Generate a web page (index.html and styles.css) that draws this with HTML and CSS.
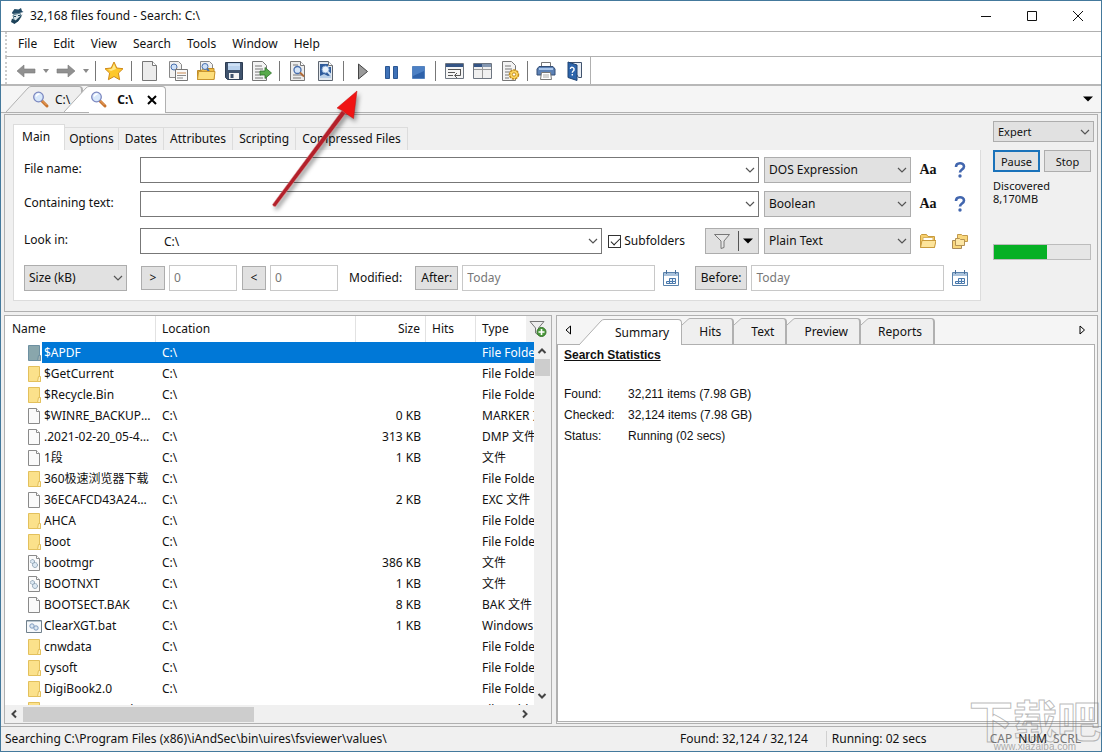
FILE: index.html
```html
<!DOCTYPE html>
<html lang="en">
<head>
  <meta charset="UTF-8">
  <meta name="viewport" content="width=device-width, initial-scale=1.0">
  <title>32,168 files found - Search: C:\</title>
  <link rel="stylesheet" href="styles.css">
</head>
<body>

  <!-- Shared icons -->
  <svg class="sprite" aria-hidden="true">
    <symbol id="i-lens" viewBox="0 0 20 20">
      <path d="M11 11l5 5" stroke="#c8742e" stroke-width="3" stroke-linecap="round"/>
      <path d="M11 10.500l4.500 4.500" stroke="#eda868" stroke-width="1"/>
      <circle cx="7.500" cy="7" r="4.800" fill="#d8e8fb" stroke="#7c88c0" stroke-width="1.300"/>
      <path d="M5 6.500q1-2.500 3.500-2.500" fill="none" stroke="#fff" stroke-width="1.500"/>
    </symbol>
    <symbol id="i-down" viewBox="0 0 10 10"><path d="M1 3l4 4 4-4" fill="none" stroke="#555" stroke-width="1.200"/></symbol>
    <symbol id="i-caret" viewBox="0 0 10 10"><path d="M0 2.500h10L5 7.500z"/></symbol>
    <symbol id="i-folder" viewBox="0 0 16 18">
      <path d="M2.500 1.500h11v11l1 0v4h-12z" fill="#fbe18b" stroke="#e3c05c"/>
      <path d="M12.500 11.500h2v5h-3z" fill="#fff0b8" stroke="#e3c05c"/>
    </symbol>
    <symbol id="i-file" viewBox="0 0 16 18">
      <path d="M2.500 1.500h8l3 3v12h-11z" fill="#fafafa" stroke="#8a8a8a"/>
      <path d="M10.500 1.500v3h3" fill="#fff" stroke="#8a8a8a"/>
    </symbol>
    <symbol id="i-gears" viewBox="0 0 16 18">
      <path d="M2.500 1.500h8l3 3v12h-11z" fill="#fafafa" stroke="#8a8a8a"/>
      <path d="M10.500 1.500v3h3" fill="#fff" stroke="#8a8a8a"/>
      <circle cx="6.500" cy="7.500" r="2" fill="#dce8f2" stroke="#8298ab" stroke-dasharray="1.500 .5"/>
      <circle cx="9" cy="11" r="2.500" fill="#dce8f2" stroke="#8298ab" stroke-dasharray="1.500 .5"/>
    </symbol>
    <symbol id="i-bat" viewBox="0 0 16 18">
      <path d="M.5 3.500h15v12H.5z" fill="#f6f8fa" stroke="#70808c"/>
      <path d="M1 4.500h14" stroke="#b9c6d0"/>
      <circle cx="6" cy="9" r="2.200" fill="#dce8f2" stroke="#7f9cc0"/>
      <circle cx="10" cy="11" r="2.200" fill="#dce8f2" stroke="#7f9cc0"/>
    </symbol>
    <symbol id="i-calendar" viewBox="0 0 16 16">
      <path d="M.5 2.500h15v13H.5z" fill="#fff" stroke="#5a82ab"/>
      <path d="M1 3h14v3H1z" fill="#a9c2dc"/>
      <path d="M3.500 0v4M12.500 0v4" stroke="#4a6f9a"/>
      <path d="M6 8h7v3h-3v3H3v-3h3z" fill="#e8f1fa"/>
      <path d="M6.500 8.500h6v3h-3v2h-6v-2h3zM9.500 8.500v3M6.500 11.500v2M6.500 11.500h3M12.500 11.500v2h-3" fill="none" stroke="#4777ab"/>
    </symbol>
    <symbol id="i-help" viewBox="0 0 16 18">
      <path d="M4 6c0-5 8-5 8-.5 0 3-4 3-4 6" fill="none" stroke="#4266ae" stroke-width="2.600"/>
      <circle cx="8" cy="15" r="1.700" fill="#4266ae"/>
    </symbol>
    <symbol id="i-page" viewBox="0 0 20 20">
      <path d="M2.500.5h10l4 4v15h-14z" fill="#ececec" stroke="#777"/>
      <path d="M12.500.5v4h4" fill="#fff" stroke="#777"/>
    </symbol>
    <symbol id="i-slant" viewBox="0 0 25 26">
      <path d="M0 26L22 2Q23.500.5 25 .5V26z" stroke="none"/>
      <path d="M0 26L22 2Q23.500.5 25 .5" fill="none"/>
    </symbol>
    <symbol id="i-corner" viewBox="0 0 8 26">
      <path d="M0 26V7L6 1.500Q7 .5 8 .5V26z" stroke="none"/>
      <path d="M0 7L6 1.500Q7 .5 8 .5" fill="none"/>
    </symbol>
  </svg>

  <div class="window">
    <header class="titlebar">
      <svg class="app-icon" viewBox="0 0 14 16">
        <path d="M2 4.500L4.500 1l4 .5L11 0l1 3 1.500 1-6 1.500-5 .5z" fill="#234b66"/>
        <path d="M3 7l7-2 1 4-4 5-3-2z" fill="#d9e5ea" stroke="#3b6478" stroke-width=".8"/>
        <path d="M12.500 6l-4 7-4 3-3.500-2 1-3.500 3.500 2z" fill="#1d4259"/>
        <path d="M4 8.500h2M8 7.500h2" stroke="#1d4259" stroke-width="1.200"/>
      </svg>
      <span class="title">32,168 files found - Search: C:\</span>
      <div class="window-buttons">
        <button aria-label="Minimize"><svg viewBox="0 0 12 12"><path d="M1 6.500h10"/></svg></button>
        <button aria-label="Maximize"><svg viewBox="0 0 12 12"><path d="M1.500 1.500h9v9h-9z"/></svg></button>
        <button aria-label="Close"><svg viewBox="0 0 12 12"><path d="M1 1l10 10M11 1L1 11"/></svg></button>
      </div>
    </header>

    <nav class="menubar">
      <button>File</button><button>Edit</button><button>View</button><button>Search</button><button>Tools</button><button>Window</button><button>Help</button>
    </nav>

    <div class="toolbar-row">
      <div class="toolbar">
        <button aria-label="Back"><svg viewBox="0 0 20 20"><path d="M1 10l7-6v4h11v4H8v4z" fill="#909090" stroke="#7b7b7b" stroke-width=".6"/></svg></button>
        <button class="drop" aria-label="Back history"><svg viewBox="0 0 10 10"><path d="M2 3h6L5 7z" fill="#8a8a8a"/></svg></button>
        <button aria-label="Forward"><svg viewBox="0 0 20 20"><path d="M19 10l-7-6v4H1v4h11v4z" fill="#909090" stroke="#7b7b7b" stroke-width=".6"/></svg></button>
        <button class="drop" aria-label="Forward history"><svg viewBox="0 0 10 10"><path d="M2 3h6L5 7z" fill="#8a8a8a"/></svg></button>
        <span class="sep"></span>
        <button aria-label="Favorites"><svg viewBox="0 0 20 20"><path d="M10 1l2.800 6 6.200.7-4.600 4.400 1.200 6.600L10 15.500l-5.600 3.200 1.200-6.600L1 7.700 7.200 7z" fill="#fdc82b" stroke="#d08a18"/><path d="M10 3l2 5-5 2-3-1.500 4-.8z" fill="#ffe98c"/></svg></button>
        <span class="sep"></span>
        <button aria-label="New search"><svg viewBox="0 0 20 20"><use href="#i-page"/></svg></button>
        <button aria-label="Search criteria"><svg viewBox="0 0 20 20"><path d="M1.500.5h9l3 3v13h-12z" fill="#f1f1f1" stroke="#888"/><circle cx="6" cy="6" r="3" fill="#cfe1f7" stroke="#486fae"/><path d="M8 8l3 3" stroke="#c27a3c" stroke-width="2"/><path d="M7.500 8.500h12v11h-12z" fill="#fafafa" stroke="#777"/><path d="M9 12h9" stroke="#c98b54"/><path d="M9 14.500h9M9 17h6" stroke="#8b8b8b"/></svg></button>
        <button aria-label="Open"><svg viewBox="0 0 20 20"><path d="M4.500.5h9l3 3v10h-12z" fill="#f1f1f1" stroke="#888"/><path d="M1.500 9.500h4l1.500-2h11v11h-16.500z" fill="#f0bc43" stroke="#c08c26"/><circle cx="9" cy="5.500" r="3" fill="#cfe1f7" stroke="#486fae"/><path d="M11 8l2 2" stroke="#486fae" stroke-width="2"/><path d="M1.500 18.500l1-8h16.500l-1 8z" fill="#fddf7d" stroke="#c9962e"/></svg></button>
        <button aria-label="Save"><svg viewBox="0 0 20 20"><path d="M1.500 1.500h17v17H3.500l-2-2z" fill="#40536d" stroke="#2c3c52"/><path d="M4 2h12v7H4z" fill="#b9d2ee"/><path d="M4 4h12" stroke="#e5f0fb"/><path d="M5 12h10v6H5z" fill="#f4f4f4"/><path d="M6.500 13h3v4h-3z" fill="#40536d"/></svg></button>
        <button aria-label="Export"><svg viewBox="0 0 20 20"><path d="M.5.5h10l4 4v15H.5z" fill="#f4f4f4" stroke="#777"/><path d="M3 5h7M3 8h8M3 11h6M3 14h6M3 17h8" stroke="#777"/><path d="M8 10h5V6.500l6.500 5.500L13 17.500V14H8z" fill="#58ab4b" stroke="#2d6f29" stroke-width=".8"/></svg></button>
        <span class="sep"></span>
        <button aria-label="Find in file"><svg viewBox="0 0 20 20"><use href="#i-page"/><path d="M5 4h5M5 14h9M5 17h8" stroke="#777"/><circle cx="9.500" cy="9" r="3.500" fill="#d5e5f8" stroke="#486fae" stroke-width="1.300"/><path d="M12 11.500l4 4" stroke="#b06a38" stroke-width="1.800"/></svg></button>
        <button aria-label="Find in image"><svg viewBox="0 0 20 20"><path d="M2.500.5h10l4 4v15h-14z" fill="#e4e9ef" stroke="#5e6670"/><path d="M12.500.5v4h4" fill="#fff" stroke="#777"/><path d="M4 3h8v3h3v11H4z" fill="#2f5b9b"/><path d="M4 15l4-2 4 2 3-1v3H4z" fill="#b9cfe8"/><circle cx="9.500" cy="8.500" r="3.500" fill="#e9f2fc" stroke="#88a9d4"/><path d="M12 11l3 3" stroke="#d5e3f3" stroke-width="2"/></svg></button>
        <span class="sep"></span>
        <button aria-label="Start"><svg viewBox="0 0 20 20"><path d="M6.500 3v15L15.500 10.500z" fill="#9a9a9a" stroke="#444"/></svg></button>
        <button aria-label="Pause search"><svg viewBox="0 0 20 20"><path d="M5.500 5.500h4v12h-4zM13.500 5.500h4v12h-4z" fill="#3f72b8" stroke="#2b5692"/></svg></button>
        <button aria-label="Stop search"><svg viewBox="0 0 20 20"><path d="M4.500 5.500h12v12h-12z" fill="#2f62aa" stroke="#5583bf"/><path d="M5 6h11v4L5 15z" fill="#4c80c4"/></svg></button>
        <span class="sep"></span>
        <button aria-label="Word wrap"><svg viewBox="0 0 20 20"><path d="M1.500 2.500h18v15h-18z" fill="#f5f5f5" stroke="#6d7580"/><path d="M2 3h17v3H2z" fill="#345485"/><path d="M4 8.500h13M4 11.500h7M4 14.500h5M16.500 9v5.500H11M13 12l-2.500 2.500L13 17" fill="none" stroke="#555"/></svg></button>
        <button aria-label="Layout"><svg viewBox="0 0 20 20"><path d="M1.500 2.500h18v15h-18z" fill="#f0f0f0" stroke="#6d7580"/><path d="M2 3h8v3H2z" fill="#345485"/><path d="M10 3h9v3h-9z" fill="#8396b0"/><path d="M2 8.500h17M10.500 6v11" stroke="#999"/></svg></button>
        <button aria-label="Settings"><svg viewBox="0 0 20 20"><path d="M2.500.5h9l4 4v15h-13z" fill="#f4f4f4" stroke="#777"/><path d="M5 5h6M5 8h7M5 11h5M5 14h4M5 17h4" stroke="#777"/><circle cx="14" cy="13.500" r="4.500" fill="#ffd75e" stroke="#c18d22" stroke-width="1.500" stroke-dasharray="2.500 .8"/><circle cx="14" cy="13.500" r="1.700" fill="#fff" stroke="#c18d22"/></svg></button>
        <span class="sep"></span>
        <button aria-label="Print"><svg viewBox="0 0 20 20"><path d="M5.500 1.500h9v6h-9z" fill="#fff" stroke="#777"/><path d="M1 8l2-2.500h14l2 2.500v6H1z" fill="#5c81b5" stroke="#334d74"/><path d="M3 7h14v2H3z" fill="#aac6ea"/><path d="M5.500 11.500h9l1 7h-11z" fill="#fff" stroke="#777"/><path d="M7 14h6M7 16h6" stroke="#aaa"/></svg></button>
        <button aria-label="Help contents"><svg viewBox="0 0 20 20"><path d="M4.500 1.500h13v15h-3z" fill="#e8edf4" stroke="#41536e"/><path d="M4 1l9 3v15.500l-9-3z" fill="#2c64ab" stroke="#1f4272"/><path d="M6.500 8c0-3 4-1.500 3.500.8-.2 1.500-1.500 1-1.700 3M8.300 13v1.500" fill="none" stroke="#fff" stroke-width="1.400"/></svg></button>
      </div>
    </div>

    <!-- Open searches -->
    <div class="doc-tabs">
      <button class="slant-tab doc">
        <svg class="slant"><use href="#i-slant"/></svg>
        <span class="tab-body"><svg class="lens"><use href="#i-lens"/></svg>C:\</span>
      </button>
      <button class="slant-tab doc active">
        <svg class="slant"><use href="#i-slant"/></svg>
        <span class="tab-body"><svg class="lens"><use href="#i-lens"/></svg>C:\
          <svg class="close" viewBox="0 0 10 10"><path d="M1 1l8 8M9 1L1 9"/></svg></span>
      </button>
      <button class="tab-list" aria-label="List tabs"><svg viewBox="0 0 10 10"><use href="#i-caret"/></svg></button>
    </div>

    <!-- Search criteria -->
    <section class="criteria">
      <div class="criteria-main">
        <div class="page-tabs">
          <button class="active">Main</button><button>Options</button><button>Dates</button><button>Attributes</button><button>Scripting</button><button>Compressed Files</button>
        </div>
        <form class="form">
          <div class="pair">
            <div class="row">
              <label for="fname">File name:</label>
              <div class="combo"><input id="fname" type="text"><svg><use href="#i-down"/></svg></div>
              <div class="pick"><select aria-label="File name expression"><option>DOS Expression</option></select><svg><use href="#i-down"/></svg></div>
              <button type="button" class="tool aa">Aa</button>
              <button type="button" class="tool" aria-label="File name help"><svg class="help"><use href="#i-help"/></svg></button>
            </div>
            <div class="row">
              <label for="ctext">Containing text:</label>
              <div class="combo"><input id="ctext" type="text"><svg><use href="#i-down"/></svg></div>
              <div class="pick"><select aria-label="Text expression"><option>Boolean</option></select><svg><use href="#i-down"/></svg></div>
              <button type="button" class="tool aa">Aa</button>
              <button type="button" class="tool" aria-label="Containing text help"><svg class="help"><use href="#i-help"/></svg></button>
            </div>
          </div>
          <div class="row">
            <label for="lookin">Look in:</label>
            <div class="combo look"><input id="lookin" type="text" value="C:\"><svg><use href="#i-down"/></svg></div>
            <label class="check"><input type="checkbox" checked>Subfolders</label>
            <button type="button" class="filter" aria-label="Filter">
              <svg class="funnel" viewBox="0 0 16 16"><path d="M.5 1.500h15L10 8v6.500l-3 1V8z" fill="#e6e6e6" stroke="#777"/></svg>
              <svg class="arrow"><use href="#i-caret"/></svg>
            </button>
            <div class="pick"><select aria-label="Document format"><option>Plain Text</option></select><svg><use href="#i-down"/></svg></div>
            <button type="button" class="tool" aria-label="Browse folder"><svg viewBox="0 0 16 16"><path d="M.5 14.500v-12l1-1h5l1.500 2h6.500v11z" fill="#f7cf6d" stroke="#c99b3c"/><path d="M3 4.500h10v4H3z" fill="#fff" stroke="#d8b25c"/><path d="M.5 14.500l1.500-7h14l-1.500 7z" fill="#fde49a" stroke="#c99b3c"/></svg></button>
            <button type="button" class="tool" aria-label="Browse multiple folders"><svg viewBox="0 0 16 16"><path d="M5.500 8.500v-7h4l1 1h5v6z" fill="#f9d77c" stroke="#c29a4d"/><path d="M.5 15.500v-8h3l1 1h5v7z" fill="#f9d77c" stroke="#a98a58"/><path d="M3.500 12.500v-7h4l1 1h4v6z" fill="#fde7a6" stroke="#b59355"/></svg></button>
          </div>
          <div class="row">
            <div class="pick size"><select aria-label="Size unit"><option>Size (kB)</option></select><svg><use href="#i-down"/></svg></div>
            <button type="button" class="cmp">&gt;</button>
            <input class="num" type="text" placeholder="0" aria-label="Larger than">
            <button type="button" class="cmp">&lt;</button>
            <input class="num" type="text" placeholder="0" aria-label="Smaller than">
            <span class="modified">Modified:</span>
            <button type="button" class="when">After:</button>
            <input class="date" type="text" placeholder="Today" aria-label="Modified after">
            <button type="button" class="tool" aria-label="Pick after date"><svg><use href="#i-calendar"/></svg></button>
            <button type="button" class="when before">Before:</button>
            <input class="date" type="text" placeholder="Today" aria-label="Modified before">
            <button type="button" class="tool" aria-label="Pick before date"><svg><use href="#i-calendar"/></svg></button>
          </div>
        </form>
      </div>
      <aside class="control">
        <div class="pick"><select aria-label="Mode"><option>Expert</option></select><svg><use href="#i-down"/></svg></div>
        <div class="run-buttons"><button class="focus">Pause</button><button>Stop</button></div>
        <p>Discovered<br>8,170MB</p>
        <div class="progress" role="progressbar" aria-label="Progress"><div class="bar" style="width: 55%"></div></div>
      </aside>
    </section>

    <main class="split">
      <!-- Result list -->
      <section class="results">
        <div class="list">
          <table>
            <colgroup><col class="c-name"><col class="c-loc"><col class="c-size"><col class="c-hits"><col></colgroup>
            <thead><tr><th>Name</th><th>Location</th><th class="num-cell">Size</th><th>Hits</th><th>Type</th></tr></thead>
            <tbody id="rows"></tbody>
          </table>
        </div>
        <button class="add-filter" aria-label="Filter results"><svg viewBox="0 0 18 18"><path d="M1 1.500h14L9.500 8v7l-3-2V8z" fill="#eee" stroke="#777"/><circle cx="12.500" cy="12" r="4.500" fill="#4c9a3c" stroke="#35752a"/><path d="M12.500 9v6M9.500 12h6" stroke="#fff" stroke-width="1.600"/></svg></button>
        <div class="vbar">
          <svg viewBox="0 0 10 10"><path d="M1.500 7L5 3.500 8.500 7"/></svg>
          <div class="thumb"></div>
          <svg class="end" viewBox="0 0 10 10"><path d="M1.500 3L5 6.500 8.500 3"/></svg>
        </div>
        <div class="hbar">
          <svg viewBox="0 0 10 10"><path d="M7 1.500L3.500 5 7 8.500"/></svg>
          <div class="thumb"></div>
          <svg class="end" viewBox="0 0 10 10"><path d="M3 1.500L6.500 5 3 8.500"/></svg>
        </div>
      </section>

      <!-- Details -->
      <section class="details">
        <div class="detail-tabs">
          <button class="scroll" aria-label="Scroll tabs left"><svg viewBox="0 0 6 10"><path d="M5.500 1v8L1 5z"/></svg></button>
          <button class="slant-tab active"><svg class="slant"><use href="#i-slant"/></svg><span class="tab-body">Summary</span></button>
          <button class="slant-tab"><svg class="slant short"><use href="#i-corner"/></svg><span class="tab-body">Hits</span></button>
          <button class="slant-tab"><svg class="slant short"><use href="#i-corner"/></svg><span class="tab-body">Text</span></button>
          <button class="slant-tab"><svg class="slant short"><use href="#i-corner"/></svg><span class="tab-body">Preview</span></button>
          <button class="slant-tab"><svg class="slant short"><use href="#i-corner"/></svg><span class="tab-body">Reports</span></button>
          <button class="scroll last" aria-label="Scroll tabs right"><svg viewBox="0 0 6 10"><path d="M1 1v8l4.500-4z"/></svg></button>
        </div>
        <div class="summary">
          <h2>Search Statistics</h2>
          <dl>
            <dt>Found:</dt><dd>32,211 items (7.98 GB)</dd>
            <dt>Checked:</dt><dd>32,124 items (7.98 GB)</dd>
            <dt>Status:</dt><dd>Running (02 secs)</dd>
          </dl>
        </div>
      </section>
    </main>

    <footer class="statusbar">
      <span class="path">Searching C:\Program Files (x86)\iAndSec\bin\uires\fsviewer\values\</span>
      <span class="found">Found: 32,124 / 32,124</span>
      <span class="running">Running: 02 secs</span>
      <span class="keys"><span>CAP</span><b>NUM</b><span>SCRL</span></span>
    </footer>
  </div>

  <!-- Arrow pointing at the start button -->
  <svg class="pointer" viewBox="0 0 100 130" aria-hidden="true">
    <path d="M77 25.500L7.500 119.500Q8 122 10.500 121.500L80.500 28.500z" fill="#b3202a" stroke="#d88" stroke-width=".5"/>
    <path d="M92 6L72 23l5.500 2.500 3.500 3 7.500 5z" fill="#f01414" stroke="#c01010" stroke-width=".5"/>
  </svg>

  <div class="watermark" aria-hidden="true">
    <div class="mark">下载吧</div>
    <div class="site">www.xiazaiba.com</div>
  </div>

  <script src="script.js"></script>
</body>
</html>
```
FILE: styles.css
```css
* {
  box-sizing: border-box;
}

body {
  margin: 0;
  font: 12px/16px "Noto Sans", "Noto Sans CJK SC", sans-serif;
  color: #111;
  background: #fff;
  overflow: hidden;
}

button,
input,
select {
  font: inherit;
  color: inherit;
  margin: 0;
}

button {
  padding: 0;
  border: 0;
  background: none;
}

.sprite {
  position: absolute;
  width: 0;
  height: 0;
}

.window {
  display: flex;
  flex-direction: column;
  height: 100vh;
  border: 1px solid #44799c;
  background: #f0f0f0;
}

/* Title bar */
.titlebar {
  display: flex;
  align-items: center;
  height: 31px;
  padding-left: 9px;
  background: #fff;
  border-bottom: 1px solid #b0b0b0;
}

.app-icon {
  width: 14px;
  height: 16px;
  margin-right: 6px;
}

.window-buttons {
  display: flex;
  margin-left: auto;
}

.window-buttons button {
  display: flex;
  justify-content: center;
  width: 46px;
}

.window-buttons svg {
  width: 12px;
  height: 12px;
  fill: none;
  stroke: #111;
}

/* Menu */
.menubar {
  display: flex;
  height: 25px;
  margin-left: 4px;
  padding-left: 3px;
  background: #fff;
  border-left: 2px dotted #ccc;
  border-bottom: 1px solid #b0b0b0;
  box-shadow: -4px 0 #fff;
}

.menubar button {
  padding: 0 8px;
}

/* Toolbar */
.toolbar-row {
  height: 29px;
  padding-left: 4px;
  background: #fff;
  border-bottom: 2px solid #b8b8b8;
}

.toolbar {
  display: flex;
  align-items: center;
  width: max-content;
  height: 27px;
  padding: 0 2px 0 5px;
  border-left: 2px dotted #ccc;
  border-right: 1px solid #b0b0b0;
}

.toolbar button {
  display: flex;
  align-items: center;
  justify-content: center;
  width: 28px;
}

.toolbar svg {
  width: 20px;
  height: 20px;
}

.toolbar .drop {
  width: 12px;
}

.toolbar .drop svg {
  width: 10px;
  height: 10px;
}

.sep {
  width: 1px;
  height: 20px;
  margin: 0 4px 0 3px;
  background: #777;
}

/* Slanted tabs */
.slant-tab {
  display: flex;
  height: 26px;
}

.slant {
  width: 25px;
  height: 26px;
  fill: #efefef;
  stroke: #b0b0b0;
}

.slant.short {
  width: 8px;
}

.tab-body {
  display: flex;
  align-items: center;
  height: 26px;
  background: #efefef;
  border-top: 1px solid #b0b0b0;
  border-right: 2px solid #b0b0b0;
  border-top-right-radius: 4px;
}

.slant-tab.active .slant {
  fill: #fff;
}

.slant-tab.active .tab-body {
  background: #fff;
}

.doc-tabs {
  display: flex;
  align-items: flex-end;
  height: 27px;
  padding-left: 5px;
  background: #f5f5f5;
  border-bottom: 1px solid #b0b0b0;
}

.doc .tab-body {
  padding-right: 11px;
}

.doc.active {
  height: 27px;
  margin: 0 0 -1px -19px;
  font-weight: bold;
  z-index: 1;
}

.doc.active .tab-body {
  height: 27px;
  padding-right: 8px;
  border-right-width: 1px;
}

.lens {
  width: 20px;
  height: 20px;
  margin-right: 4px;
}

.doc.active .lens {
  margin-right: 8px;
}

.close {
  width: 10px;
  height: 10px;
  margin-left: 14px;
  stroke: #000;
  stroke-width: 2;
}

.tab-list {
  align-self: center;
  margin: 0 8px 0 auto;
}

.tab-list svg {
  display: block;
  width: 10px;
  height: 10px;
}

/* Search criteria */
.criteria {
  display: flex;
  gap: 12px;
  height: 198px;
  margin: 1px 3px 0;
  padding: 8px 2px 0 8px;
  border: 1px solid #b0b0b0;
}

.criteria-main {
  flex: 1;
  min-width: 0;
}

.page-tabs {
  display: flex;
  align-items: flex-end;
  height: 27px;
}

.page-tabs button {
  height: 23px;
  padding: 0 6px;
  border: solid #dcdcdc;
  border-width: 1px 1px 0 0;
}

.page-tabs button:nth-child(2) {
  padding: 0 4px;
}

.page-tabs .active {
  height: 26px;
  padding: 0 14px 2px 8px;
  background: #fff;
  border-left-width: 1px;
}

.form {
  display: flex;
  flex-direction: column;
  gap: 11px;
  height: 151px;
  padding: 7px 4px 0 10px;
  background: #fff;
  border: 1px solid #dcdcdc;
  border-top: 0;
}

.pair {
  display: flex;
  flex-direction: column;
  gap: 8px;
}

.row {
  display: flex;
  align-items: center;
  height: 26px;
}

.row > label:first-child {
  width: 116px;
  padding-bottom: 2px;
}

.combo,
.pick {
  display: flex;
  position: relative;
}

.combo {
  flex: 1;
}

.combo input {
  width: 100%;
  height: 26px;
  padding: 0 23px;
  background: #fff;
  border: 1px solid #777;
}

.combo svg,
.pick svg {
  position: absolute;
  right: 4px;
  top: 8px;
  width: 10px;
  height: 10px;
  pointer-events: none;
}

.pick {
  width: 147px;
  margin-left: 5px;
}

.pick select {
  width: 100%;
  height: 26px;
  padding: 0 4px;
  appearance: none;
  background: #e1e1e1;
  border: 1px solid #adadad;
  border-radius: 0;
}

.tool {
  display: flex;
  justify-content: center;
  width: 32px;
}

.tool svg {
  width: 16px;
  height: 16px;
}

.row > .pick + .tool {
  margin-left: 1px;
}

.tool .help {
  height: 18px;
}

.aa {
  font: bold 14px/18px "Liberation Serif", serif;
}

.check {
  display: flex;
  align-items: center;
  gap: 3px;
  margin: 0 20px 0 6px;
}

.check input {
  appearance: none;
  width: 13px;
  height: 13px;
  border: 1px solid #333;
  background: #fff;
}

.check input:checked::after {
  content: "";
  display: block;
  width: 8px;
  height: 4px;
  margin: 2px 0 0 2px;
  border: solid #222;
  border-width: 0 0 1px 1px;
  transform: rotate(-45deg);
}

.filter {
  display: flex;
  align-items: center;
  height: 26px;
  width: 54px;
  padding-left: 8px;
  background: #e1e1e1;
  border: 1px solid #adadad;
}

.funnel {
  width: 16px;
  height: 16px;
}

.filter .arrow {
  width: 15px;
  height: 20px;
  margin-left: 8px;
  padding: 5px 0 5px 4px;
  border-left: 1px solid #555;
}

.pick.size {
  width: 103px;
  margin: 0 14px 0 0;
}

.cmp,
.when,
.run-buttons button {
  height: 24px;
  background: #e1e1e1;
  border: 1px solid #adadad;
}

.cmp {
  width: 24px;
}

.num,
.date {
  height: 26px;
  padding: 0 4px 2px;
  border: 1px solid #c8c8c8;
  background: #fff;
}

.num {
  width: 68px;
  margin: 0 5px 0 4px;
}

.num::placeholder,
.date::placeholder {
  color: #777;
  opacity: 1;
}

.modified {
  margin: 0 13px 0 6px;
}

.when {
  padding: 0 5px;
}

.date {
  flex: 1;
  min-width: 0;
  margin-left: 4px;
}

.before {
  margin-left: 8px;
}

/* Run control */
.control {
  width: 102px;
  font-size: 11px;
  line-height: 13px;
}

.control .pick {
  width: 101px;
  margin: -2px 0 8px;
}

.control .pick select {
  height: 21px;
}

.control .pick svg {
  top: 6px;
}

.run-buttons {
  display: flex;
  gap: 4px;
}

.run-buttons button {
  width: 47px;
  height: 22px;
}

.run-buttons .focus {
  border: 2px solid #1a72ba;
}

.control p {
  margin: 7px 0 39px;
}

.progress {
  width: 98px;
  height: 16px;
  background: #e6e6e6;
  border: 1px solid #bcbcbc;
}

.bar {
  height: 100%;
  background: #06b025;
}

/* Results and details */
.split {
  display: flex;
  flex: 1;
  gap: 4px;
  min-height: 0;
  margin: 3px 3px 2px;
}

.results {
  position: relative;
  display: grid;
  grid-template: 1fr 18px / 1fr 17px;
  flex: 549;
  min-width: 0;
  border: 1px solid #b0b0b0;
}

.list {
  overflow: hidden;
  background: #fff;
}

table {
  width: 100%;
  table-layout: fixed;
  border-collapse: separate;
  border-spacing: 0;
}

.c-name { width: 151px; }
.c-loc { width: 200px; }
.c-size { width: 70px; }
.c-hits { width: 50px; }

th {
  height: 26px;
  padding: 0 6px;
  font-weight: normal;
  text-align: left;
  border-right: 1px solid #e2e2e2;
}

th:first-child {
  padding-left: 7px;
}

th:last-child {
  border-right: 0;
}

td {
  height: 21px;
  padding: 0 0 0 6px;
  white-space: nowrap;
  overflow: hidden;
}

.num-cell,
th.num-cell {
  padding-right: 5px;
  text-align: right;
}

.file {
  display: flex;
  align-items: center;
  padding-left: 15px;
}

.file svg {
  flex: none;
  width: 16px;
  height: 18px;
}

.file span {
  flex: 1;
  height: 21px;
  padding: 0 3px 0 2px;
  line-height: 21px;
  overflow: hidden;
  text-overflow: ellipsis;
}

.selected td,
.selected .file span {
  background: #0078d7;
  color: #fff;
}

.selected td:first-child {
  background: #fff;
}

.selected svg {
  filter: hue-rotate(150deg) brightness(.72) saturate(.5);
}

.add-filter {
  position: absolute;
  top: 0;
  right: 0;
  display: flex;
  align-items: center;
  justify-content: center;
  width: 25px;
  height: 26px;
  background: #f0f0f0;
}

.add-filter svg {
  width: 18px;
  height: 18px;
}

.vbar,
.hbar {
  display: flex;
  align-items: center;
  background: #f0f0f0;
}

.vbar {
  flex-direction: column;
  padding: 30px 0 4px;
}

.hbar {
  grid-column: 1 / 3;
  padding: 0 17px 0 4px;
}

.vbar svg,
.hbar svg {
  width: 10px;
  height: 10px;
  fill: none;
  stroke: #444;
  stroke-width: 2;
}

.thumb {
  background: #cdcdcd;
}

.vbar .thumb {
  width: 15px;
  height: 17px;
  margin-top: 3px;
}

.vbar .end {
  margin-top: auto;
}

.hbar .thumb {
  width: 44%;
  height: 15px;
  margin-left: 4px;
}

.hbar .end {
  margin: 0 4px 0 auto;
}

.details {
  display: flex;
  flex-direction: column;
  flex: 541;
  min-width: 0;
  padding: 0 2px 1px 0;
  background: #f5f5f5;
  border: 1px solid #b0b0b0;
}

.detail-tabs {
  display: flex;
  align-items: flex-end;
  height: 29px;
  border-bottom: 1px solid #b0b0b0;
}

.detail-tabs .slant-tab.active {
  margin-bottom: -1px;
}

.detail-tabs .tab-body {
  padding: 0 11px 0 9px;
}

.detail-tabs .active .tab-body {
  padding: 0 12px 0 11px;
  border-right-width: 1px;
}

.scroll {
  align-self: center;
  width: 22px;
}

.scroll svg {
  display: block;
  width: 6px;
  height: 10px;
  margin: 0 auto;
  fill: none;
  stroke: #000;
}

.scroll.last {
  width: 26px;
  margin-left: auto;
}

.summary {
  flex: 1;
  padding: 1px 6px;
  background: #fff;
  border: 1px solid #b0b0b0;
  border-top: 0;
  font: 12px/21px "Liberation Sans", sans-serif;
}

.summary h2 {
  margin: 0 0 20px;
  font-size: 12px;
  line-height: 18px;
  text-decoration: underline;
}

.summary dl {
  display: grid;
  grid-template-columns: 64px 1fr;
  margin: 0;
}

.summary dd {
  margin: 0;
}

/* Status bar */
.statusbar {
  display: flex;
  align-items: center;
  height: 25px;
  padding: 0 20px 0 4px;
  border-top: 1px solid #b0b0b0;
}

.path {
  flex: 1;
}

.running {
  width: 164px;
  margin-left: 18px;
  padding-left: 5px;
  border-left: 1px solid #d0d0d0;
}

.keys {
  display: flex;
  gap: 6px;
  color: #777;
}

.keys b {
  color: #111;
  font-weight: normal;
}

/* Overlays */
.pointer {
  position: absolute;
  left: 265px;
  top: 85px;
  width: 100px;
  height: 130px;
  filter: drop-shadow(2px 3px 2px rgba(0, 0, 0, .4));
  pointer-events: none;
}

.watermark {
  position: absolute;
  right: 1px;
  bottom: 0;
  text-align: center;
  pointer-events: none;
}

.mark {
  font: bold 44px/46px "Noto Sans CJK SC", sans-serif;
  color: transparent;
  -webkit-text-stroke: 1px rgba(120, 120, 120, .5);
}

.site {
  font: 10px/10px "Liberation Sans", sans-serif;
  color: rgba(120, 120, 120, .6);
}
```
FILE: script.js
```js
// name, icon, size, type
const files = [
  ["$APDF", "folder", "", "File Folder"],
  ["$GetCurrent", "folder", "", "File Folder"],
  ["$Recycle.Bin", "folder", "", "File Folder"],
  ["$WINRE_BACKUP_PARTITION.MARKER", "file", "0 KB", "MARKER 文件"],
  [".2021-02-20_05-41.dmp", "file", "313 KB", "DMP 文件"],
  ["1段", "file", "1 KB", "文件"],
  ["360极速浏览器下载", "folder", "", "File Folder"],
  ["36ECAFCD43A24DD8.exc", "file", "2 KB", "EXC 文件"],
  ["AHCA", "folder", "", "File Folder"],
  ["Boot", "folder", "", "File Folder"],
  ["bootmgr", "gears", "386 KB", "文件"],
  ["BOOTNXT", "gears", "1 KB", "文件"],
  ["BOOTSECT.BAK", "file", "8 KB", "BAK 文件"],
  ["ClearXGT.bat", "bat", "1 KB", "Windows Batch File"],
  ["cnwdata", "folder", "", "File Folder"],
  ["cysoft", "folder", "", "File Folder"],
  ["DigiBook2.0", "folder", "", "File Folder"],
  ["Documents and", "folder", "", "File Folder"]
];

const rows = document.getElementById("rows");

files.forEach(([name, icon, size, type], index) => {
  const row = document.createElement("tr");
  if (index === 0) row.className = "selected";
  row.innerHTML = `
    <td><div class="file"><svg><use href="#i-${icon}"/></svg><span>${name}</span></div></td>
    <td>C:\\</td>
    <td class="num-cell">${size}</td>
    <td></td>
    <td>${type}</td>`;
  rows.appendChild(row);
});
```
